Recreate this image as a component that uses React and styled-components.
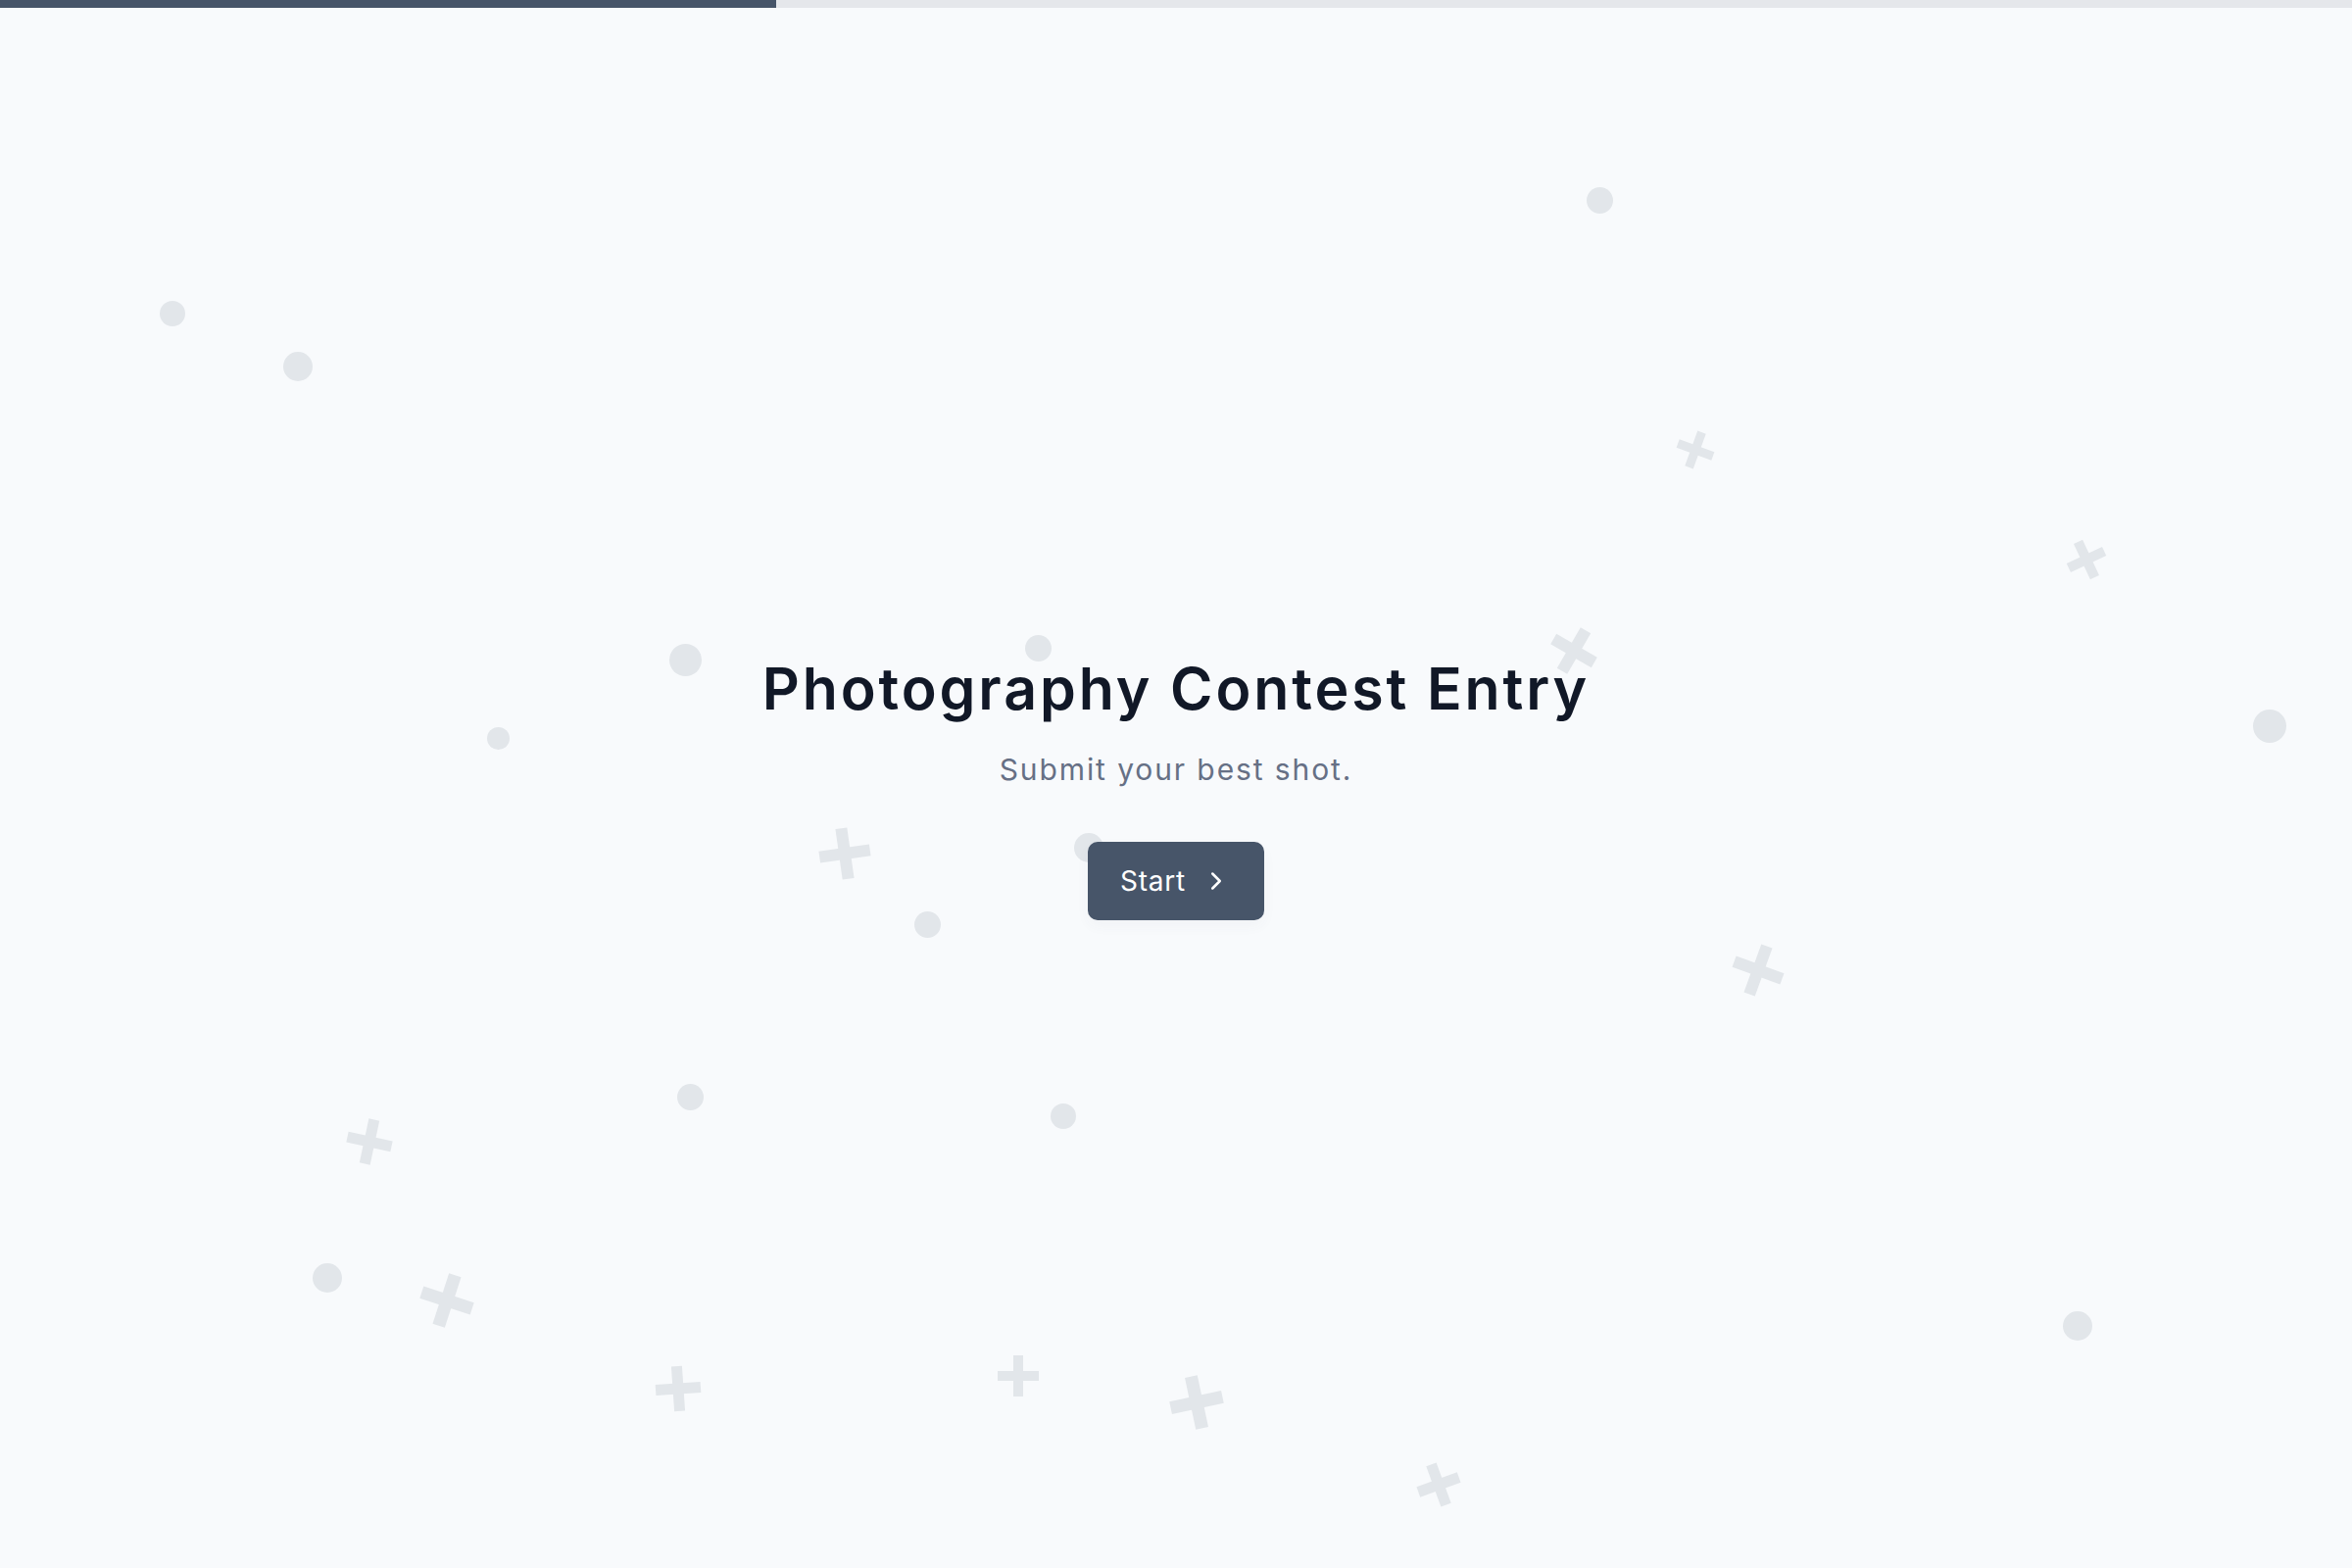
import styled, { createGlobalStyle } from 'styled-components';
import { ChevronRight } from 'lucide-react';

const GlobalStyle = createGlobalStyle`
  html, body {
    margin: 0;
    padding: 0;
    background: #f8fafc;
  }
  body {
    font-family: Inter, "Open Sans", sans-serif;
  }
`

const Page = styled.div`
  position: relative;
  height: 100vh;
  display: flex;
  flex-direction: column;
  overflow: hidden;
  background: #f8fafc;
`

const Progress = styled.div`
  height: 8px;
  background: #e5e7eb;
  flex-shrink: 0;
`

const ProgressFill = styled.div`
  height: 100%;
  background: #475569;
`

const Backdrop = styled.div`
  position: absolute;
  inset: 0;
  pointer-events: none;
`

const Dot = styled.span`
  position: absolute;
  left: ${p => p.$x}px;
  top: ${p => p.$y}px;
  width: ${p => p.$d}px;
  height: ${p => p.$d}px;
  margin: ${p => -p.$d / 2}px 0 0 ${p => -p.$d / 2}px;
  border-radius: 50%;
  background: #e2e6ea;
`

const Cross = styled.span`
  position: absolute;
  left: ${p => p.$x}px;
  top: ${p => p.$y}px;
  width: ${p => p.$s}px;
  height: ${p => p.$s}px;
  margin: ${p => -p.$s / 2}px 0 0 ${p => -p.$s / 2}px;
  transform: rotate(${p => p.$r}deg);
  &::before, &::after {
    content: '';
    position: absolute;
    background: #e2e6ea;
  }
  &::before {
    left: 0;
    right: 0;
    top: 50%;
    height: ${p => Math.round(p.$s * 0.24)}px;
    transform: translateY(-50%);
  }
  &::after {
    top: 0;
    bottom: 0;
    left: 50%;
    width: ${p => Math.round(p.$s * 0.24)}px;
    transform: translateX(-50%);
  }
`

const Hero = styled.main`
  position: relative;
  flex: 1;
  display: flex;
  flex-direction: column;
  align-items: center;
  justify-content: center;
  padding-bottom: 1px;
`

const Title = styled.h1`
  margin: 0;
  font-size: 59px;
  line-height: 1.2;
  font-weight: 600;
  letter-spacing: 2.9px;
  color: #111827;
`

const Subtitle = styled.p`
  margin: 26px 0 0;
  font-size: 30px;
  line-height: 1.4;
  font-weight: 400;
  letter-spacing: 1.9px;
  color: #667085;
`

const StartButton = styled.button`
  margin-top: 53px;
  height: 80px;
  display: inline-flex;
  align-items: center;
  gap: 16px;
  padding: 0 34px 0 33px;
  border: none;
  border-radius: 10px;
  background: #475569;
  color: #fff;
  font-family: inherit;
  font-size: 28px;
  font-weight: 400;
  letter-spacing: 0.8px;
  box-shadow: 0 6px 14px rgba(71, 85, 105, 0.04);
  cursor: pointer;
`

const dots = [
  [1632, 204, 27], [176, 320, 26], [304, 374, 30], [699, 673, 33],
  [1059, 661, 27], [508, 753, 23], [2316, 741, 34], [1111, 865, 30],
  [946, 943, 27], [704, 1119, 27], [1085, 1139, 26], [334, 1304, 30],
  [2120, 1353, 30],
]

const crosses = [
  [1730, 459, 38, 20], [2129, 571, 40, -25], [1606, 664, 48, 30],
  [862, 871, 52, -8], [1794, 990, 52, 20], [377, 1165, 46, 12],
  [456, 1327, 54, 18], [692, 1417, 46, -4], [1039, 1404, 42, 0],
  [1221, 1431, 54, -12], [1468, 1515, 44, -20],
]

export default function App() {
  const progress = 33
  return (
    <>
      <GlobalStyle />
      <Page>
        <Backdrop>
          {dots.map(([x, y, d], i) => <Dot key={'d' + i} $x={x} $y={y} $d={d} />)}
          {crosses.map(([x, y, s, r], i) => <Cross key={'c' + i} $x={x} $y={y} $s={s} $r={r} />)}
        </Backdrop>
        <Progress>
          <ProgressFill style={{ width: `${progress}%` }} />
        </Progress>
        <Hero>
          <Title>Photography Contest Entry</Title>
          <Subtitle>Submit your best shot.</Subtitle>
          <StartButton>
            Start
            <ChevronRight size={30} strokeWidth={2} />
          </StartButton>
        </Hero>
      </Page>
    </>
  )
}
